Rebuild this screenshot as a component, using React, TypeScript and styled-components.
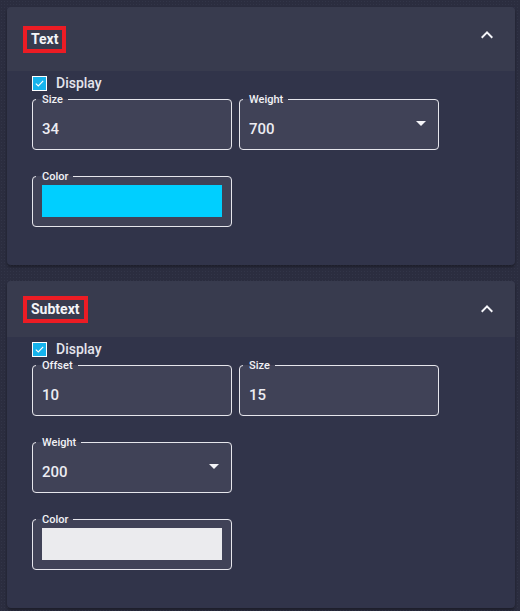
import React from "react";
import styled, { createGlobalStyle } from "styled-components";

const GlobalStyle = createGlobalStyle`
    body {
        margin: 0;
        background-color: #2b2d3f;
        font-family: Roboto, "Liberation Sans", sans-serif;
    }
`;

const Page = styled.div`
    min-height: 611px;
    box-sizing: border-box;
    padding: 7px 5px 3px 7px;
    display: flex;
    flex-direction: column;
    gap: 16px;
    background-color: #2b2d3f;
    background-image: radial-gradient(#323548 0.8px, transparent 0.9px);
    background-size: 3px 3px;
`;

const Panel = styled.section`
    background-color: #31344a;
    border-radius: 4px;
    box-shadow: 0 2px 3px rgba(0, 0, 0, 0.35);
    overflow: hidden;
`;

const Header = styled.div<{ $height: number }>`
    height: ${props => props.$height}px;
    background-color: #383b4e;
    display: flex;
    align-items: center;
    justify-content: space-between;
    padding: 0 16px;
`;

const Title = styled.h2`
    margin: 0;
    border: 4px solid #ec1c24;
    padding: 0 4px;
    color: #f4f4f8;
    font-size: 14px;
    line-height: 19px;
    font-weight: 700;
`;

const Chevron = styled.svg<{ $lift: number }>`
    width: 24px;
    height: 24px;
    fill: #f4f4f8;
    margin-bottom: ${props => props.$lift}px;
`;

const Body = styled.div`
    padding: 2px 16px 38px 25px;
`;

const CheckRow = styled.label`
    height: 20px;
    display: flex;
    align-items: center;
    gap: 9px;
    color: #e4e4ec;
    font-size: 14px;
    font-weight: 500;
`;

const Grid = styled.div`
    display: grid;
    grid-template-columns: 200px 200px;
    column-gap: 7px;
    row-gap: 20px;
`;

const Field = styled.fieldset`
    margin: 0;
    min-width: 0;
    padding: 0 9px 0 3px;
    border: 1px solid #e6e6ec;
    border-radius: 4px;
    background-color: #404257;
`;

const Legend = styled.legend`
    padding: 0 5px 0 6px;
    color: #f2f2f6;
    font-size: 11px;
    line-height: 13px;
    font-weight: 500;
`;

const ValueRow = styled.div`
    height: 43px;
    box-sizing: border-box;
    padding: 2px 0 0 6px;
    display: flex;
    align-items: center;
    justify-content: space-between;
    color: #ececf2;
    font-size: 15px;
    font-weight: 500;
`;

const Arrow = styled.svg`
    width: 24px;
    height: 24px;
    fill: #f4f4f8;
    align-self: flex-start;
    margin: 3px -4px 0 0;
`;

const Swatch = styled.div<{ $color: string }>`
    width: 180px;
    height: 32px;
    margin: 2px 0 9px 6px;
    background-color: ${props => props.$color};
`;

function CheckBox() {
    return (
        <svg width="15" height="15" viewBox="0 0 15 15">
            <rect x="0.5" y="0.5" width="14" height="14" fill="#16b3ec" stroke="#ffffff" />
            <polyline points="3.8,7.6 6.3,10 11.2,4.8" fill="none" stroke="#ffffff" strokeWidth="1.1" />
        </svg>
    );
}

function NumberField({ label, value }: { label: string; value: string }) {
    return (
        <Field>
            <Legend>{label}</Legend>
            <ValueRow>{value}</ValueRow>
        </Field>
    );
}

function SelectField({ label, value }: { label: string; value: string }) {
    return (
        <Field>
            <Legend>{label}</Legend>
            <ValueRow>
                {value}
                <Arrow viewBox="0 0 24 24">
                    <path d="M7 10l5 5 5-5z" />
                </Arrow>
            </ValueRow>
        </Field>
    );
}

function ColorField({ color }: { color: string }) {
    return (
        <Field>
            <Legend>Color</Legend>
            <Swatch $color={color} />
        </Field>
    );
}

interface SectionProps {
    title: string;
    headerHeight: number;
    lift: number;
    children: React.ReactNode;
}

function Section({ title, headerHeight, lift, children }: SectionProps) {
    return (
        <Panel>
            <Header $height={headerHeight}>
                <Title>{title}</Title>
                <Chevron $lift={lift} viewBox="0 0 24 24">
                    <path d="M12 8l-6 6 1.41 1.41L12 10.83l4.59 4.58L18 14z" />
                </Chevron>
            </Header>
            <Body>
                <CheckRow>
                    <CheckBox />
                    Display
                </CheckRow>
                <Grid>{children}</Grid>
            </Body>
        </Panel>
    );
}

function App() {
    return (
        <Page>
            <GlobalStyle />
            <Section title="Text" headerHeight={64} lift={8}>
                <NumberField label="Size" value="34" />
                <SelectField label="Weight" value="700" />
                <ColorField color="#00cfff" />
            </Section>
            <Section title="Subtext" headerHeight={56} lift={0}>
                <NumberField label="Offset" value="10" />
                <NumberField label="Size" value="15" />
                <SelectField label="Weight" value="200" />
                <div />
                <ColorField color="#ebebee" />
            </Section>
        </Page>
    );
}

export default App;
